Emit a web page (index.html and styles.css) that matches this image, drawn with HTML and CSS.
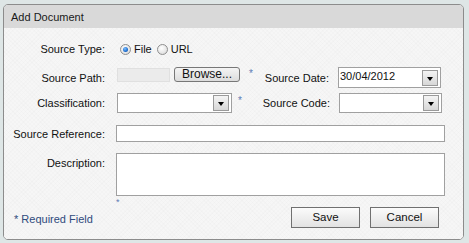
FILE: index.html
```html
<!DOCTYPE html>
<html>
<head>
<meta charset="utf-8">
<link rel="stylesheet" href="styles.css">
</head>
<body>
<div class="panel">
  <div class="head">Add Document</div>
  <div class="body">
    <div class="row r1">
      <div class="lbl">Source Type:</div>
      <span class="radio on"></span><span class="rtxt">File</span>
      <span class="radio"></span><span class="rtxt">URL</span>
    </div>
    <div class="row r2">
      <div class="lbl">Source Path:</div>
      <span class="filebox"></span>
      <span class="browse">Browse...</span>
      <span class="star s2">*</span>
      <div class="lbl2 l2a">Source Date:</div>
      <div class="sel w103"><span class="val">30/04/2012</span><span class="arrow"></span></div>
    </div>
    <div class="row r3">
      <div class="lbl">Classification:</div>
      <div class="sel w115"><span class="val"></span><span class="arrow"></span></div>
      <span class="star s3">*</span>
      <div class="lbl2 l2b">Source Code:</div>
      <div class="sel w103"><span class="val"></span><span class="arrow"></span></div>
    </div>
    <div class="row r4">
      <div class="lbl">Source Reference:</div>
      <div class="text"></div>
    </div>
    <div class="row r5">
      <div class="lbl top">Description:</div>
      <div class="col">
        <div class="area"></div>
        <span class="star s5">*</span>
      </div>
    </div>
    <div class="foot">
      <span class="req">* Required Field</span>
      <div class="btns">
        <span class="btn">Save</span>
        <span class="btn">Cancel</span>
      </div>
    </div>
  </div>
</div>
</body>
</html>
```

FILE: styles.css
```css
html, body { margin: 0; padding: 0; }
body {
  background: #dee6e6;
  font-family: "Liberation Sans", Arial, sans-serif;
  font-size: 11px;
  color: #111;
  width: 469px;
  height: 243px;
  overflow: hidden;
}
.panel {
  margin: 4px 0 0 3px;
  width: 459px;
  height: 234px;
  border: 1px solid #8c8c8c;
  border-radius: 5px;
  background: #f5f5f5;
  overflow: hidden;
}
.head {
  height: 23px;
  line-height: 24px;
  background: #d9d9d9;
  padding-left: 7px;
  color: #1a1a1a;
}
.body {
  background-color: #f6f6f6;
  background-image: repeating-linear-gradient(45deg, rgba(0,0,0,0.012) 0 1px, transparent 1px 3px), repeating-linear-gradient(-45deg, rgba(0,0,0,0.012) 0 1px, transparent 1px 3px);
  height: 211px;
}
.row { display: flex; align-items: center; }
.lbl { width: 101px; text-align: right; margin-right: 12px; flex: none; }
.lbl.top { align-self: flex-start; padding-top: 4px; }
.r1 { padding-top: 11px; height: 20px; }
.r2 { margin-top: 8px; height: 21px; }
.r3 { margin-top: 5px; height: 20px; }
.r4 { margin-top: 12px; height: 17px; }
.r5 { margin-top: 11px; align-items: flex-start; }

.radio {
  width: 11px; height: 11px; border-radius: 50%;
  border: 1px solid #8e8e8e;
  background: radial-gradient(circle at 40% 35%, #ffffff 0, #e6e6e6 60%, #cfcfcf 100%);
  box-sizing: border-box;
  margin-left: 3px;
  position: relative;
  flex: none;
}
.radio.on::after {
  content: ""; position: absolute; left: 2px; top: 2px; width: 5px; height: 5px; border-radius: 50%;
  background: radial-gradient(circle at 40% 35%, #7fc0ff 0, #1f6fd0 60%, #0c3f8c 100%);
}
.rtxt { margin-left: 3px; margin-right: 2px; }

.filebox {
  width: 53px; height: 14px; margin-top: -6px;
  background: #ebebeb;
  border: 1px solid #e0e0e0;
  box-sizing: border-box;
}
.browse {
  width: 66px; height: 15px; margin-left: 4px; margin-top: -6px;
  border: 1px solid #777;
  border-radius: 3px;
  box-sizing: border-box;
  background: linear-gradient(#f4f4f4, #dcdcdc);
  text-align: center;
  line-height: 13px;
  font-size: 12px;
}
.star { color: #5c7bb5; font-size: 10px; line-height: 10px; }
.s2 { margin-left: 9px; margin-top: -8px; width: 8px; }
.s3 { margin-left: 6px; margin-top: -4px; width: 8px; }
.lbl2 { text-align: right; margin-right: 9px; flex: none; }
.l2a { width: 72px; }
.l2b { width: 84px; }

.sel {
  height: 21px;
  box-sizing: border-box;
  border: 1px solid #a0a0a0;
  background: #fff;
  display: flex;
  align-items: center;
  justify-content: space-between;
  flex: none;
}
.r3 .sel { height: 20px; }
.w103 { width: 103px; }
.w115 { width: 115px; }
.val { padding-left: 1px; font-size: 11px; margin-top: -4px; }
.arrow {
  width: 16px; height: 16px; margin-right: 2px;
  box-sizing: border-box;
  border: 1px solid #9a9a9a;
  background: linear-gradient(#f4f4f4, #d7d7d7);
  position: relative;
}
.arrow::after {
  content: ""; position: absolute; left: 4px; top: 6px;
  border-left: 3px solid transparent; border-right: 3px solid transparent;
  border-top: 4px solid #000;
}
.text {
  width: 329px; height: 17px; box-sizing: border-box;
  border: 1px solid #a0a0a0; background: #fff;
  margin-left: -1px;
}
.col { display: flex; flex-direction: column; margin-left: -1px; }
.area {
  width: 329px; height: 43px; box-sizing: border-box;
  border: 1px solid #a0a0a0; background: #fff;
}
.s5 { margin-left: 0px; margin-top: 2px; font-size: 9px; height: 6px; line-height: 8px; }

.foot {
  display: flex; align-items: center; justify-content: space-between;
  margin-top: 3px;
  padding-left: 10px;
  padding-right: 24px;
}
.req { color: #2f4a7d; margin-top: 2px; }
.btns { display: flex; gap: 10px; }
.btn {
  width: 69px; height: 21px; box-sizing: border-box;
  border: 1px solid #707070;
  background: linear-gradient(#fbfbfb, #e2e2e2);
  text-align: center; line-height: 18px;
  font-size: 11.5px;
}
```
